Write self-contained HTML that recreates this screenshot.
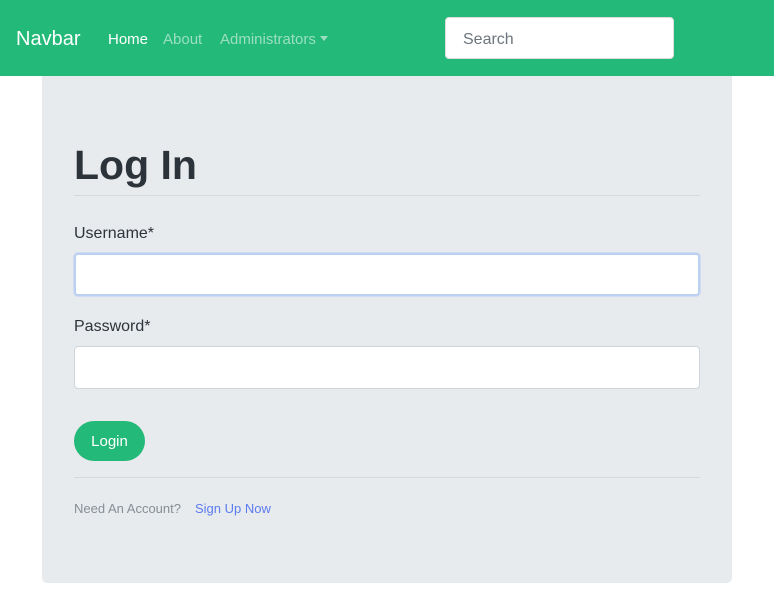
<!DOCTYPE html>
<html><head><style>
*{box-sizing:border-box;margin:0;padding:0}
body{width:774px;height:591px;background:#fff;font-family:"Liberation Sans",sans-serif;position:relative;overflow:hidden}
.nav{position:absolute;left:0;top:0;width:774px;height:76px;background:#23b978}
.brand{position:absolute;left:16px;top:28px;font-size:20px;color:#fff}
.link{position:absolute;top:31px;font-size:15px;color:rgba(255,255,255,.55)}
.caret{display:inline-block;width:0;height:0;border-left:4px solid transparent;border-right:4px solid transparent;border-top:5px solid rgba(255,255,255,.55);vertical-align:3px;margin-left:4px}
.search{position:absolute;left:445px;top:17px;width:229px;height:42px;background:#fff;border-radius:4px;border:1px solid #ddd;padding:0 17px;line-height:43px;font-size:16px;color:#6c757d}
.card{position:absolute;left:42px;top:76px;width:690px;height:507px;background:#e8ebee;border-radius:0 0 5px 5px}
h1{position:absolute;left:74px;top:142px;font-size:41px;font-weight:bold;color:#2d333a}
.hr{position:absolute;left:74px;width:626px;height:1px;background:#d6d9dc}
.lbl{position:absolute;left:74px;font-size:16px;color:#2d333a}
.inp{position:absolute;left:74px;width:626px;height:43px;background:#fff;border:1px solid #ced4da;border-radius:4px}
.btn{position:absolute;left:74px;top:421px;width:71px;height:40px;border-radius:20px;background:#23b978;color:#fff;font-size:15px;text-align:center;line-height:42px}
.foot{position:absolute;left:74px;top:501px;font-size:13px;color:#868e96}
.foot span{color:#5b7cf0;margin-left:14px}
</style></head><body>
<div class="nav">
<div class="brand">Navbar</div>
<div class="link" style="left:108px;color:#fff">Home</div>
<div class="link" style="left:163px">About</div>
<div class="link" style="left:220px">Administrators<span class="caret"></span></div>
<div class="search">Search</div>
</div>
<div class="card"></div>
<h1>Log In</h1>
<div class="hr" style="top:195px"></div>
<div class="lbl" style="top:225px">Username*</div>
<div class="inp" style="top:253px;border:2px solid #bcd0f2;box-shadow:0 0 0 1px #d0dcf4"></div>
<div class="lbl" style="top:318px">Password*</div>
<div class="inp" style="top:346px"></div>
<div class="btn">Login</div>
<div class="hr" style="top:477px"></div>
<div class="foot">Need An Account?<span>Sign Up Now</span></div>
</body></html>
